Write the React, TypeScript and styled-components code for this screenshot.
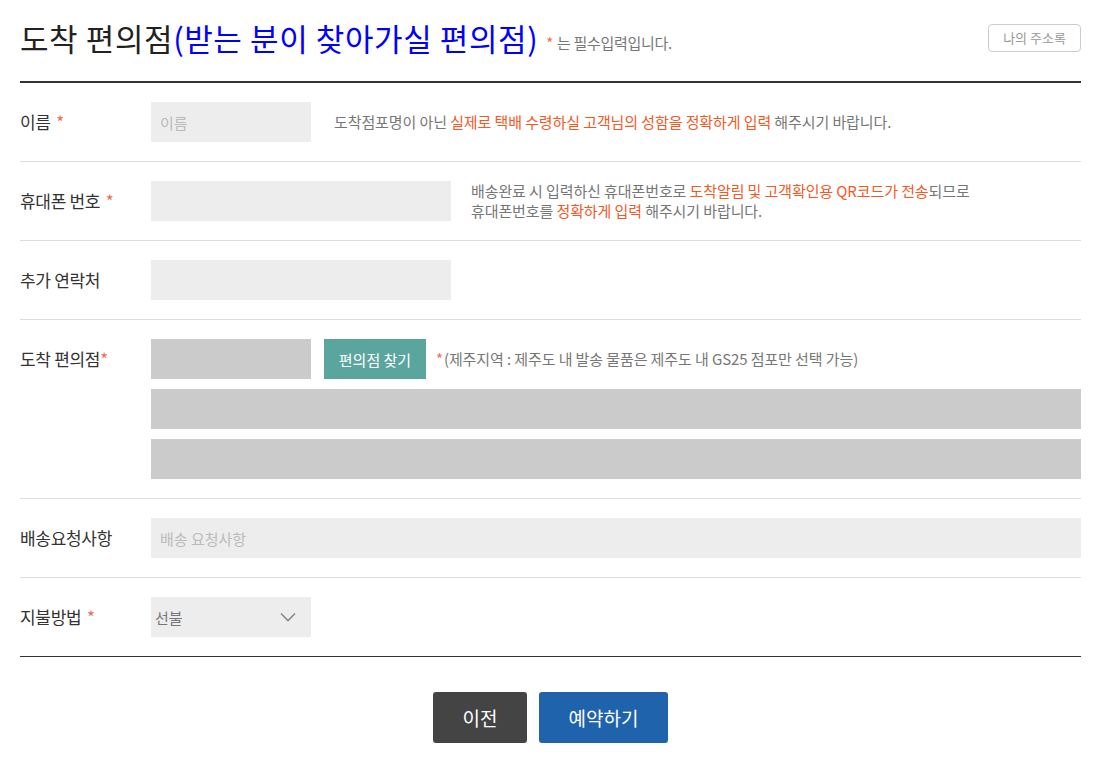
import React, { useState } from "react";
import styled, { createGlobalStyle } from "styled-components";

const GlobalStyle = createGlobalStyle`
  body {
    margin: 0;
    background: #fff;
    font-family: "Noto Sans CJK KR", "Noto Sans", sans-serif;
    color: #333;
  }
`;

const Page = styled.div`
  width: 1061px;
  margin-left: 20px;
`;

const Header = styled.div`
  display: flex;
  align-items: center;
  height: 75px;
  padding-bottom: 6px;
  border-bottom: 2px solid #333;
`;

const Title = styled.h2`
  margin: 0;
  font-size: 31px;
  font-weight: 400;
  letter-spacing: 0.6px;
  color: #222;
`;

const TitleSub = styled.span`
  color: #0000ff;
`;

const Note = styled.span`
  margin-left: 8px;
  margin-top: 10px;
  font-size: 15px;
  color: #777;
  letter-spacing: -0.3px;
`;

const Star = styled.span<{ $tight?: boolean }>`
  color: #f26c4f;
  margin: ${({ $tight }) => ($tight ? "0 1px 0 0" : "0 2px")};
`;

const AddressButton = styled.button`
  margin-left: auto;
  height: 28px;
  width: 93px;
  padding: 0;
  border: 1px solid #ccc;
  border-radius: 4px;
  background: #fff;
  font-family: inherit;
  font-size: 13px;
  color: #999;
`;

const Row = styled.div<{ $last?: boolean }>`
  display: grid;
  grid-template-columns: 131px 1fr;
  padding: 19px 0;
  border-bottom: ${({ $last }) => ($last ? "1px solid #333" : "1px solid #ddd")};
`;

const Label = styled.div`
  font-size: 17px;
  line-height: 40px;
  color: #333;
  letter-spacing: -0.3px;
`;

const Field = styled.div`
  display: flex;
  flex-direction: column;
  gap: 10px;
`;

const Line = styled.div`
  display: flex;
  align-items: center;
`;

const Input = styled.input<{ $width?: string; $dark?: boolean }>`
  box-sizing: border-box;
  width: ${({ $width }) => $width || "160px"};
  height: 40px;
  padding: 0 9px;
  border: 0;
  outline: none;
  background: ${({ $dark }) => ($dark ? "#cbcbcb" : "#ededed")};
  font-family: inherit;
  font-size: 15px;
  color: #555;
  &::placeholder {
    color: #bbb;
  }
`;

const Help = styled.p<{ $gap?: number }>`
  margin: 0 0 0 ${({ $gap }) => $gap ?? 20}px;
  font-size: 15px;
  line-height: 20px;
  color: #777;
  letter-spacing: -0.1px;
`;

const Hot = styled.span`
  color: #f5591f;
`;

const FindButton = styled.button`
  width: 102px;
  height: 40px;
  margin-left: 13px;
  border: 0;
  background: #5ba59f;
  color: #fff;
  font-family: inherit;
  font-size: 15px;
`;

const SelectWrap = styled.div`
  position: relative;
  width: 160px;
  height: 40px;
`;

const Select = styled.select`
  appearance: none;
  width: 100%;
  height: 100%;
  padding: 0 4px;
  border: 0;
  outline: none;
  background: #ededed;
  font-family: inherit;
  font-size: 15px;
  color: #777;
`;

const Chevron = styled.svg`
  position: absolute;
  right: 15px;
  top: 15px;
  pointer-events: none;
`;

const Actions = styled.div`
  display: flex;
  justify-content: center;
  gap: 12px;
  margin-top: 35px;
`;

const ActionButton = styled.button<{ $primary?: boolean }>`
  height: 51px;
  width: ${({ $primary }) => ($primary ? "129px" : "94px")};
  border: 0;
  border-radius: 3px;
  background: ${({ $primary }) => ($primary ? "#1f63ad" : "#444")};
  color: #fff;
  font-family: inherit;
  font-size: 19px;
`;

const App: React.FC = () => {
  const [payment, setPayment] = useState("선불");

  return (
    <Page>
      <GlobalStyle />
      <Header>
        <Title>
          도착 편의점<TitleSub>(받는 분이 찾아가실 편의점)</TitleSub>
        </Title>
        <Note>
          <Star $tight>*</Star> 는 필수입력입니다.
        </Note>
        <AddressButton>나의 주소록</AddressButton>
      </Header>

      <Row>
        <Label>
          이름 <Star>*</Star>
        </Label>
        <Line>
          <Input placeholder="이름" />
          <Help $gap={23}>
            도착점포명이 아닌 <Hot>실제로 택배 수령하실 고객님의 성함을 정확하게 입력</Hot> 해주시기 바랍니다.
          </Help>
        </Line>
      </Row>

      <Row>
        <Label>
          휴대폰 번호 <Star>*</Star>
        </Label>
        <Line>
          <Input $width="300px" />
          <Help>
            배송완료 시 입력하신 휴대폰번호로 <Hot>도착알림 및 고객확인용 QR코드가 전송</Hot>되므로
            <br />
            휴대폰번호를 <Hot>정확하게 입력</Hot> 해주시기 바랍니다.
          </Help>
        </Line>
      </Row>

      <Row>
        <Label>추가 연락처</Label>
        <Line>
          <Input $width="300px" />
        </Line>
      </Row>

      <Row>
        <Label>
          도착 편의점<Star $tight>*</Star>
        </Label>
        <Field>
          <Line>
            <Input $dark readOnly />
            <FindButton>편의점 찾기</FindButton>
            <Help $gap={10}>
              <Star $tight>*</Star>(제주지역 : 제주도 내 발송 물품은 제주도 내 GS25 점포만 선택 가능)
            </Help>
          </Line>
          <Input $dark $width="100%" readOnly />
          <Input $dark $width="100%" readOnly />
        </Field>
      </Row>

      <Row>
        <Label>배송요청사항</Label>
        <Line>
          <Input $width="100%" placeholder="배송 요청사항" />
        </Line>
      </Row>

      <Row $last>
        <Label>
          지불방법 <Star>*</Star>
        </Label>
        <Line>
          <SelectWrap>
            <Select value={payment} onChange={(e) => setPayment(e.target.value)}>
              <option value="선불">선불</option>
              <option value="착불">착불</option>
            </Select>
            <Chevron width="16" height="10" viewBox="0 0 16 10">
              <path d="M1 1.5 L8 8.5 L15 1.5" fill="none" stroke="#888" strokeWidth="1.6" />
            </Chevron>
          </SelectWrap>
        </Line>
      </Row>

      <Actions>
        <ActionButton>이전</ActionButton>
        <ActionButton $primary>예약하기</ActionButton>
      </Actions>
    </Page>
  );
};

export default App;
